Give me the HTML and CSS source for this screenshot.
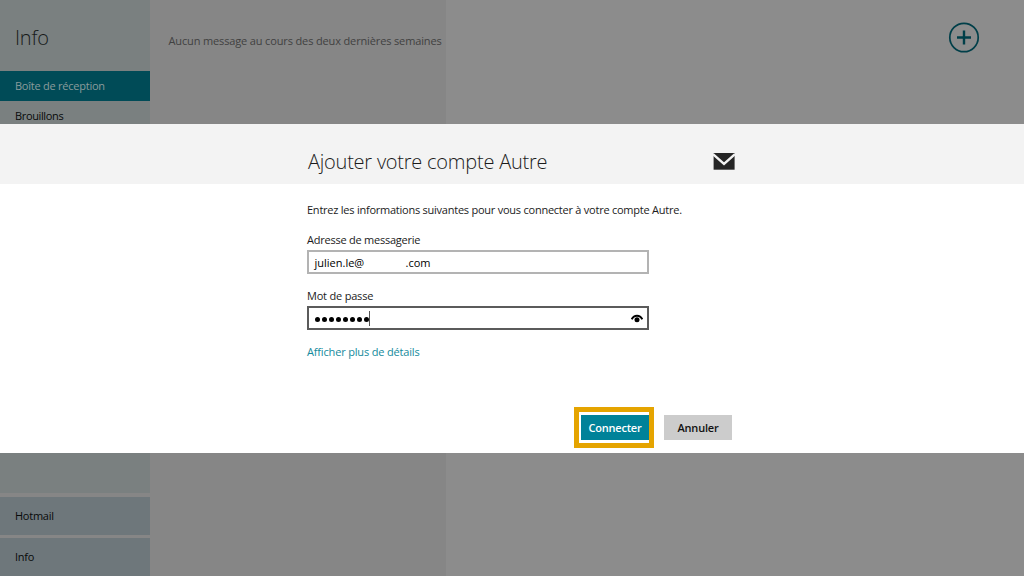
FILE: index.html
```html
<!DOCTYPE html>
<html lang="fr">
<head>
<meta charset="utf-8">
<title>Ajouter votre compte Autre</title>
<link rel="stylesheet" href="styles.css">
</head>
<body>
<div class="mail">
  <aside class="sidebar">
    <h1 class="account-name">Info</h1>
    <nav class="folders">
      <div class="folder selected">Boîte de réception</div>
      <div class="folder drafts">Brouillons</div>
    </nav>
    <div class="accounts">
      <div class="account">Hotmail</div>
      <div class="account">Info</div>
    </div>
  </aside>
  <section class="messages"><p class="empty">Aucun message au cours des deux dernières semaines</p></section>
  <main class="reading">
    <svg class="add" viewBox="0 0 32 32"><circle cx="16" cy="15.500" r="14.200"/><path d="M16 8.500v14M9 15.500h14"/></svg>
  </main>
</div>
<div class="dialog">
  <header class="dialog-head">
    <h2 class="title">Ajouter votre compte Autre</h2>
    <svg class="envelope" viewBox="0 0 22 17"><path class="paper" d="M.6 0h21v16.700H.6z"/><path class="fold" d="M0 1.200L11 11L22 1.200"/></svg>
  </header>
  <form class="dialog-body">
    <p class="intro">Entrez les informations suivantes pour vous connecter à votre compte Autre.</p>
    <div class="label">Adresse de messagerie</div>
    <div class="field email"><span class="user">julien.le@</span><span class="domain">.com</span></div>
    <div class="label second">Mot de passe</div>
    <div class="field focused">
      <span class="dots"><i></i><i></i><i></i><i></i><i></i><i></i><i></i><i></i></span><span class="caret"></span>
      <svg class="eye" viewBox="0 0 12 9"><path d="M.7 5.300C2.800.4 9.200.4 11.300 5.300"/><circle cx="6" cy="5.700" r="2.500"/></svg>
    </div>
    <div class="more">Afficher plus de détails</div>
    <div class="actions">
      <div class="highlight"><div class="button primary">Connecter</div></div>
      <div class="button">Annuler</div>
    </div>
  </form>
</div>
</body>
</html>
```
FILE: styles.css
```css
* { box-sizing: border-box; }
body { margin: 0; width: 1024px; height: 576px; overflow: hidden; position: relative; background: #fff; color: #1b1b1b; font: 11px/16px "Open Sans", "Noto Sans", sans-serif; letter-spacing: -.24px; white-space: nowrap; }
h1, h2, p { margin: 0; font-weight: 300; }
svg { display: block; }
.mail { display: flex; height: 576px; color: #080a0a; }
.sidebar { width: 150px; background: #7a8080; display: flex; flex-direction: column; }
.account-name { height: 71px; padding: 24px 0 0 15px; font-size: 20px; line-height: 28px; letter-spacing: -.2px; color: #171a1a; }
.folder { height: 30px; padding: 7px 0 0 15px; }
.drafts { letter-spacing: -.36px; }
.selected { background: #004b57; color: #8b9b9c; }
.accounts { margin-top: auto; border-top: 4px solid #868686; display: grid; gap: 3px; background: #868686; }
.account { height: 38px; padding: 11px 0 0 15px; background: #6e777b; }
.messages { width: 296px; background: #868686; padding: 33px 0 0 18px; color: #414141; }
.empty { padding-left: .5px; font-weight: 400; letter-spacing: -.14px; }
.reading { flex: 1; background: #8c8c8c; display: flex; justify-content: flex-end; padding: 22px 44px 0 0; }
.add { width: 32px; height: 32px; fill: none; stroke: #003f49; stroke-width: 1.7; }
.add path { stroke-width: 2.4; }
.dialog { position: absolute; left: 0; top: 124px; width: 1024px; height: 329px; background: #fff; }
.dialog-head { height: 60px; background: #f3f3f3; padding: 0 289px 0 308px; display: flex; justify-content: space-between; align-items: flex-start; }
.title { margin-top: 23px; font-size: 20px; line-height: 30px; letter-spacing: -.23px; }
.envelope { width: 22px; height: 17px; margin-top: 29px; }
.paper { fill: #252525; }
.fold { fill: none; stroke: #f3f3f3; stroke-width: 2.4; }
.dialog-body { padding: 18px 0 0 307px; }
.intro { height: 30px; font-weight: 400; }
.label { height: 18px; }
.second { margin-top: 14px; letter-spacing: -.2px; }
.field { width: 342px; height: 24px; border: 2px solid #b3b3b3; display: flex; align-items: center; padding: 0 4px 0 5px; }
.email { padding: 2px 4px 0 5.5px; letter-spacing: 0; color: #000; }
.focused { border-color: #5b5b5b; }
.user { width: 91px; }
.dots { display: flex; gap: 2px; margin: 3px 0 0 1px; }
.dots i { width: 5px; height: 5px; border-radius: 50%; background: #000; }
.caret { width: 1px; height: 15px; background: #555; }
.eye { width: 12px; height: 9px; margin-left: auto; }
.eye path { fill: none; stroke: #000; stroke-width: 2; }
.more { margin-top: 14px; color: #138a9c; letter-spacing: -.17px; }
.actions { margin: 47px 0 0 267px; display: flex; align-items: center; gap: 10px; }
.highlight { width: 80px; height: 41px; border: 5px solid #e5a400; padding: 3px 0 0 2px; }
.button { width: 68px; height: 25px; background: #ccc; display: flex; justify-content: center; align-items: center; font-weight: 600; letter-spacing: -.2px; color: #111; }
.primary { background: #008299; color: #fff; }
```
